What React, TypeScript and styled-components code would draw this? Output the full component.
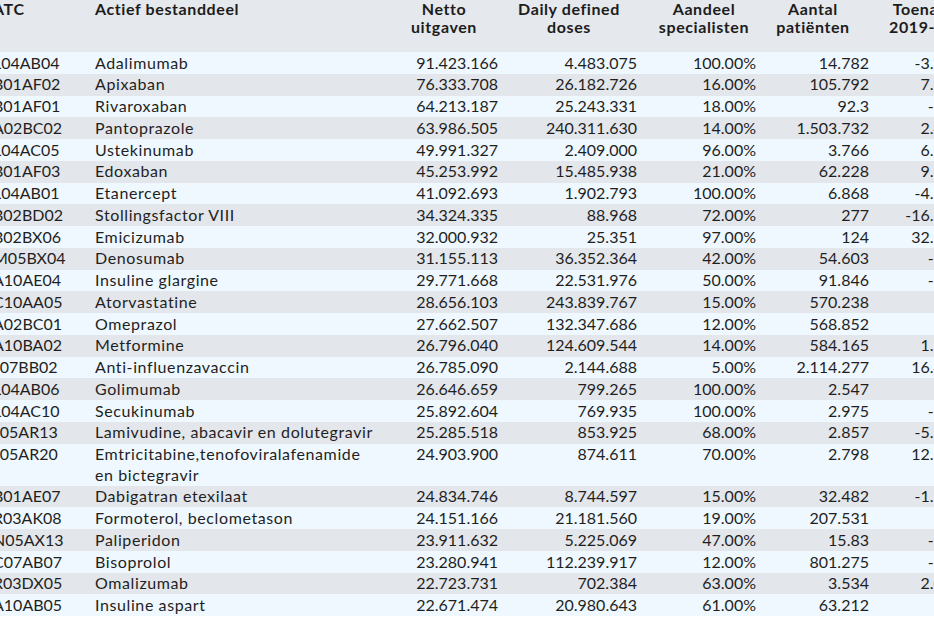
import React from 'react';
import styled, { createGlobalStyle } from 'styled-components';

const Global = createGlobalStyle`
  html, body { margin: 0; padding: 0; background: #ffffff; overflow: hidden; }
  body { font-family: Lato, "Open Sans", "DejaVu Sans", sans-serif; color: #1f1f1f; }
`;

const Viewport = styled.div`
  width: 934px;
  height: 622px;
  overflow: hidden;
  background: #ffffff;
`;

const Table = styled.table`
  border-collapse: collapse;
  border-spacing: 0;
  table-layout: fixed;
  width: 982px;
  margin-left: -7px;
  font-size: 16px;
`;

type Align = 'left' | 'right' | 'center';

const HeadCell = styled.th<{ $width: number; $pl: number; $pr: number; $align: Align }>`
  box-sizing: border-box;
  width: ${(p) => p.$width}px;
  height: 52px;
  padding: 0 ${(p) => p.$pr}px 0 ${(p) => p.$pl}px;
  vertical-align: top;
  text-align: ${(p) => p.$align};
  font-weight: 700;
  line-height: 18px;
  letter-spacing: 0.6px;
  white-space: nowrap;
  background: #e5e8ec;
  color: #1c1c1c;
`;

const Row = styled.tr<{ $striped: boolean }>`
  background: ${(p) => (p.$striped ? '#e3e6eb' : '#eef8fe')};
`;

const Cell = styled.td<{ $pl: number; $pr: number; $align: Align; $wrap: boolean; $text: boolean }>`
  box-sizing: border-box;
  padding: 0.68px ${(p) => p.$pr}px 0.68px ${(p) => p.$pl}px;
  vertical-align: top;
  text-align: ${(p) => p.$align};
  line-height: 20.4px;
  letter-spacing: ${(p) => (p.$text ? '0.6px' : '0')};
  white-space: ${(p) => (p.$wrap ? 'normal' : 'nowrap')};
  overflow: hidden;
  color: #1f1f1f;
`;

type Col = {
  label: React.ReactNode;
  width: number;
  pl: number;
  pr: number;
  align: Align;
  headAlign: Align;
  wrap?: boolean;
  text?: boolean;
};

const columns: Col[] = [
  { label: 'ATC', width: 102, pl: 0, pr: 0, align: 'left', headAlign: 'left' },
  { label: 'Actief bestanddeel', width: 294, pl: 0, pr: 10, align: 'left', headAlign: 'left', wrap: true, text: true },
  { label: <>Netto<br />uitgaven</>, width: 110, pl: 1, pr: 1, align: 'right', headAlign: 'center' },
  { label: <>Daily defined<br />doses</>, width: 145, pl: 2, pr: 7, align: 'right', headAlign: 'center' },
  { label: <>Aandeel<br />specialisten</>, width: 113, pl: 8, pr: 1, align: 'right', headAlign: 'center' },
  { label: <>Aantal<br />patiënten</>, width: 123, pl: 0, pr: 11, align: 'right', headAlign: 'center' },
  { label: <>Toename<br />2019-2020</>, width: 95, pl: 9, pr: 10, align: 'right', headAlign: 'center' },
];

const rows: string[][] = [
  ['L04AB04', 'Adalimumab', '91.423.166', '4.483.075', '100.00%', '14.782', '-3.27%'],
  ['B01AF02', 'Apixaban', '76.333.708', '26.182.726', '16.00%', '105.792', '7.81%'],
  ['B01AF01', 'Rivaroxaban', '64.213.187', '25.243.331', '18.00%', '92.3', '-10%'],
  ['A02BC02', 'Pantoprazole', '63.986.505', '240.311.630', '14.00%', '1.503.732', '2.45%'],
  ['L04AC05', 'Ustekinumab', '49.991.327', '2.409.000', '96.00%', '3.766', '6.12%'],
  ['B01AF03', 'Edoxaban', '45.253.992', '15.485.938', '21.00%', '62.228', '9.36%'],
  ['L04AB01', 'Etanercept', '41.092.693', '1.902.793', '100.00%', '6.868', '-4.58%'],
  ['B02BD02', 'Stollingsfactor VIII', '34.324.335', '88.968', '72.00%', '277', '-16.20%'],
  ['B02BX06', 'Emicizumab', '32.000.932', '25.351', '97.00%', '124', '32.14%'],
  ['M05BX04', 'Denosumab', '31.155.113', '36.352.364', '42.00%', '54.603', '-12%'],
  ['A10AE04', 'Insuline glargine', '29.771.668', '22.531.976', '50.00%', '91.846', '-11%'],
  ['C10AA05', 'Atorvastatine', '28.656.103', '243.839.767', '15.00%', '570.238', '3%'],
  ['A02BC01', 'Omeprazol', '27.662.507', '132.347.686', '12.00%', '568.852', '1%'],
  ['A10BA02', 'Metformine', '26.796.040', '124.609.544', '14.00%', '584.165', '1.73%'],
  ['J07BB02', 'Anti-influenzavaccin', '26.785.090', '2.144.688', '5.00%', '2.114.277', '16.48%'],
  ['L04AB06', 'Golimumab', '26.646.659', '799.265', '100.00%', '2.547', '2%'],
  ['L04AC10', 'Secukinumab', '25.892.604', '769.935', '100.00%', '2.975', '-14%'],
  ['J05AR13', 'Lamivudine, abacavir en dolutegravir', '25.285.518', '853.925', '68.00%', '2.857', '-5.31%'],
  ['J05AR20', 'Emtricitabine,tenofoviralafenamide en bictegravir', '24.903.900', '874.611', '70.00%', '2.798', '12.66%'],
  ['B01AE07', 'Dabigatran etexilaat', '24.834.746', '8.744.597', '15.00%', '32.482', '-1.92%'],
  ['R03AK08', 'Formoterol, beclometason', '24.151.166', '21.181.560', '19.00%', '207.531', '4%'],
  ['N05AX13', 'Paliperidon', '23.911.632', '5.225.069', '47.00%', '15.83', '-17%'],
  ['C07AB07', 'Bisoprolol', '23.280.941', '112.239.917', '12.00%', '801.275', '-13%'],
  ['R03DX05', 'Omalizumab', '22.723.731', '702.384', '63.00%', '3.534', '2.08%'],
  ['A10AB05', 'Insuline aspart', '22.671.474', '20.980.643', '61.00%', '63.212', '5%'],
];

export default function App() {
  return (
    <>
      <Global />
      <Viewport>
        <Table>
          <thead>
            <tr>
              {columns.map((c, i) => (
                <HeadCell key={i} $width={c.width} $pl={c.pl} $pr={c.pr} $align={c.headAlign}>
                  {c.label}
                </HeadCell>
              ))}
            </tr>
          </thead>
          <tbody>
            {rows.map((r, ri) => (
              <Row key={ri} $striped={ri % 2 === 1}>
                {r.map((v, ci) => {
                  const c = columns[ci];
                  return (
                    <Cell
                      key={ci}
                      $pl={c.pl}
                      $pr={c.pr}
                      $align={c.align}
                      $wrap={!!c.wrap}
                      $text={!!c.text}
                    >
                      {v}
                    </Cell>
                  );
                })}
              </Row>
            ))}
          </tbody>
        </Table>
      </Viewport>
    </>
  );
}
